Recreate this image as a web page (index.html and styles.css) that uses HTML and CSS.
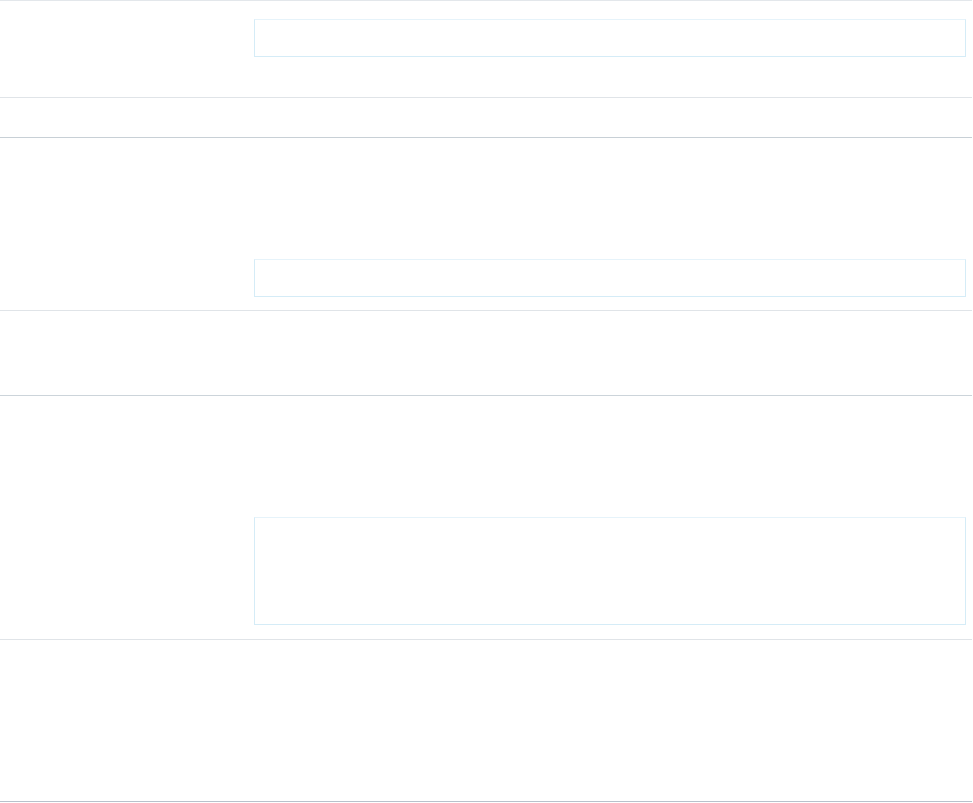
FILE: index.html
```html
<!DOCTYPE html>
<html lang="en">
<head>
<meta charset="utf-8">
<title>Form</title>
<link rel="stylesheet" href="styles.css">
</head>
<body>
<div class="form">
  <div class="row row-1 first">
    <div class="label"></div>
    <div class="field"><div class="input"></div></div>
  </div>
  <div class="row row-2 dark"></div>
  <div class="row row-3">
    <div class="label"></div>
    <div class="field"><div class="input"></div></div>
  </div>
  <div class="row row-4 mid"></div>
  <div class="row row-5">
    <div class="label"></div>
    <div class="field"><div class="input textarea"></div></div>
  </div>
  <div class="row row-6 darkest"></div>
</div>
</body>
</html>
```

FILE: styles.css
```css
html, body {
  margin: 0;
  padding: 0;
  background: #ffffff;
  font-family: "Liberation Sans", Arial, sans-serif;
}

.form {
  width: 972px;
}

.row {
  display: grid;
  grid-template-columns: 254px 1fr;
  border-bottom: 1px solid #e0e4e8;
  box-sizing: content-box;
}

.row.first {
  border-top: 1px solid #e3e7eb;
}

.row.dark {
  border-bottom-color: #c8d0d6;
}

.row.mid {
  border-bottom-color: #ccd4da;
}

.row.darkest {
  border-bottom-color: #b8c1cb;
}

.field {
  padding-right: 6px;
}

.input {
  box-sizing: border-box;
  height: 38px;
  border: 1px solid #d5ecf7;
  border-top-color: #e6f3fa;
  background: #ffffff;
}

.input.textarea {
  height: 108px;
}

.row-1 { height: 96px; }
.row-1 .field { padding-top: 18px; }

.row-2 { height: 39px; }

.row-3 { height: 172px; }
.row-3 .field { padding-top: 121px; }

.row-4 { height: 84px; }

.row-5 { height: 243px; }
.row-5 .field { padding-top: 121px; }

.row-6 { height: 161px; }
```
